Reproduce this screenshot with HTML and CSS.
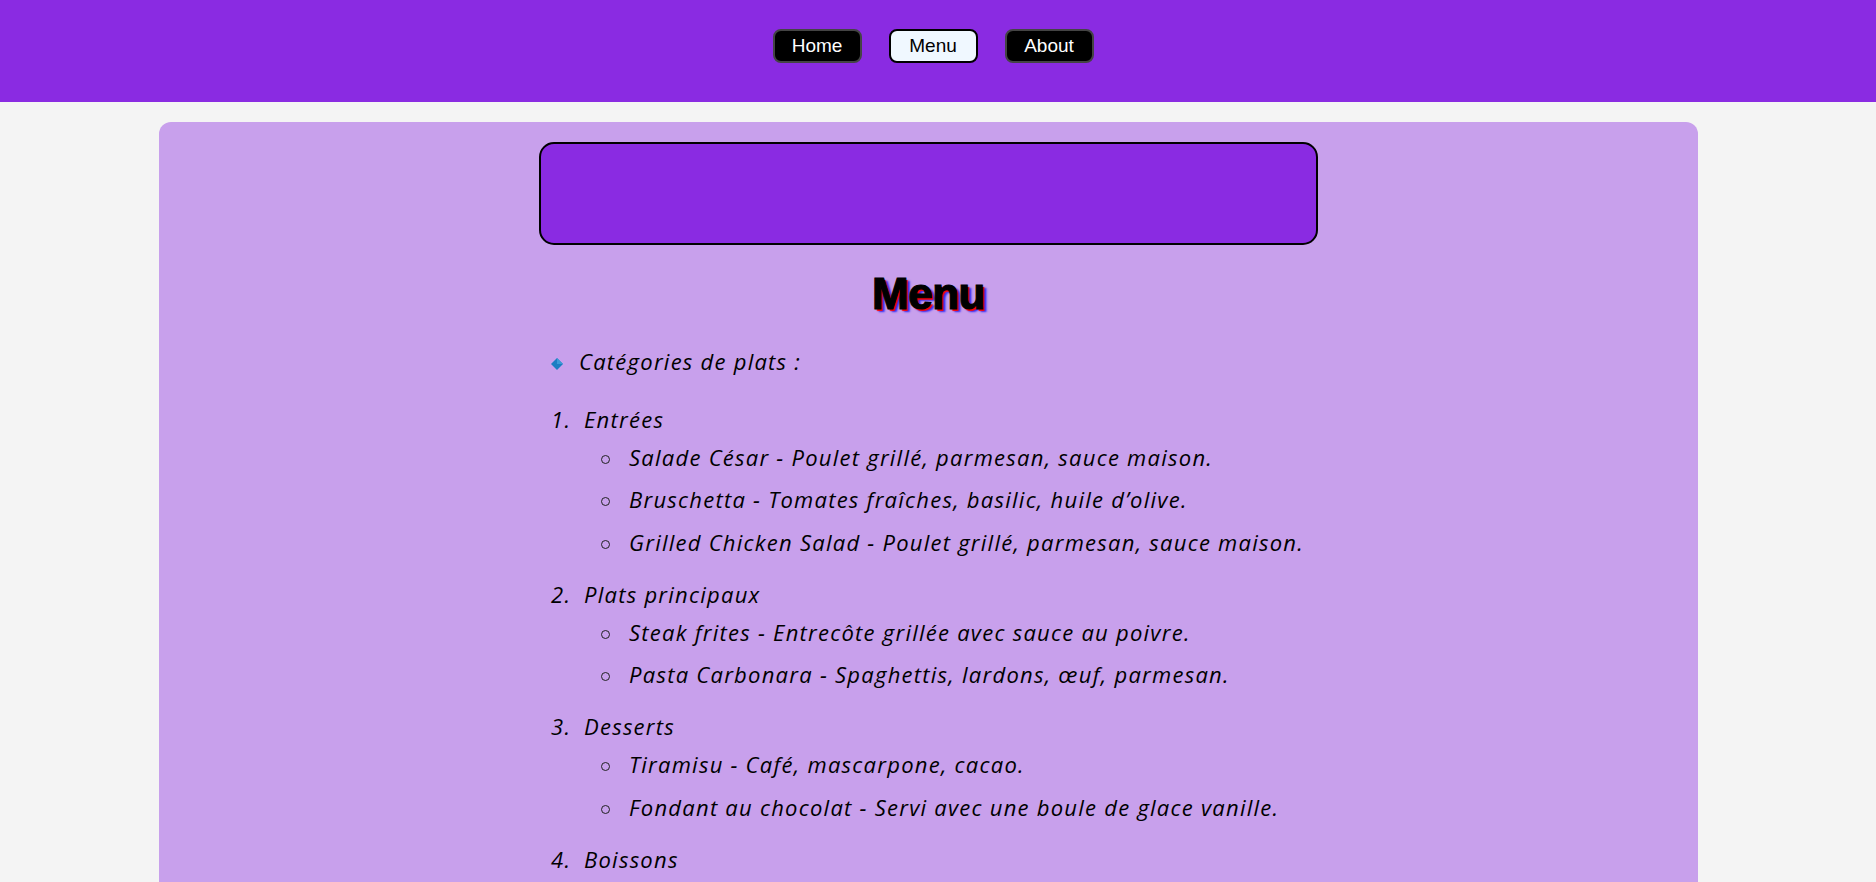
FILE: index.html
```html
<!DOCTYPE html>
<html lang="fr">
<head>
<meta charset="utf-8">
<title>Menu</title>
<link rel="stylesheet" href="styles.css">
</head>
<body>
<header class="site-header">
  <nav class="nav">
    <a class="nav-btn" href="#">Home</a>
    <a class="nav-btn nav-btn-active" href="#">Menu</a>
    <a class="nav-btn" href="#">About</a>
  </nav>
</header>
<main class="card">
  <div class="banner"></div>
  <h1 class="title">Menu</h1>
  <div class="content">
    <p class="categories"><span class="diamond"><svg width="12" height="12" viewBox="0 0 12 12"><polygon points="6,0 12,6 6,12 0,6" fill="#1b7ec2"/><polygon points="6,0 12,6 6,6" fill="#3a9ad6"/></svg></span>Catégories de plats :</p>
    <ol class="menu-list">
      <li class="menu-cat"><span class="cat-name">Entrées</span>
        <ul class="dish-list">
          <li class="dish">Salade César - Poulet grillé, parmesan, sauce maison.</li>
          <li class="dish">Bruschetta - Tomates fraîches, basilic, huile d’olive.</li>
          <li class="dish">Grilled Chicken Salad - Poulet grillé, parmesan, sauce maison.</li>
        </ul>
      </li>
      <li class="menu-cat"><span class="cat-name">Plats principaux</span>
        <ul class="dish-list">
          <li class="dish">Steak frites - Entrecôte grillée avec sauce au poivre.</li>
          <li class="dish">Pasta Carbonara - Spaghettis, lardons, œuf, parmesan.</li>
        </ul>
      </li>
      <li class="menu-cat"><span class="cat-name">Desserts</span>
        <ul class="dish-list">
          <li class="dish">Tiramisu - Café, mascarpone, cacao.</li>
          <li class="dish">Fondant au chocolat - Servi avec une boule de glace vanille.</li>
        </ul>
      </li>
      <li class="menu-cat"><span class="cat-name">Boissons</span></li>
    </ol>
  </div>
</main>
</body>
</html>
```
FILE: styles.css
```css
html, body {
  margin: 0;
  padding: 0;
}
body {
  background: #f4f4f4;
  font-family: "Liberation Sans", Arial, sans-serif;
}
.site-header {
  background: #8a2be2;
  padding: 29px 0 39px;
}
.nav {
  display: flex;
  justify-content: center;
  gap: 27px;
  padding-right: 10px;
}
.nav-btn {
  display: block;
  box-sizing: border-box;
  width: 89px;
  height: 34px;
  line-height: 30px;
  text-align: center;
  font-size: 19px;
  color: #fff;
  background: #000;
  border: 2px solid #444;
  border-radius: 8px;
  text-decoration: none;
}
.nav-btn-active {
  background: #f0f8ff;
  color: #000;
  border-color: #000;
}
.card {
  box-sizing: border-box;
  width: 1539px;
  margin: 20px 0 0 159px;
  padding: 20px 0 40px;
  background: #c8a0ec;
  border-radius: 12px;
  display: flex;
  flex-direction: column;
  align-items: center;
}
.banner {
  box-sizing: border-box;
  width: 779px;
  height: 103px;
  background: #8a2be2;
  border: 2px solid #000;
  border-radius: 15px;
}
.title {
  margin: 25px 0 0;
  height: 48px;
  line-height: 48px;
  font-family: "Liberation Sans", Arial, sans-serif;
  font-weight: bold;
  font-size: 44px;
  letter-spacing: -0.5px;
  color: #000;
  -webkit-text-stroke: 1.2px #000;
  text-shadow: 2px 2px 1px #ff0000, 4px 3px 2px #2a2aff;
}
.content {
  box-sizing: border-box;
  width: 779px;
  padding-left: 12px;
  margin-top: 26.75px;
  font-family: "Open Sans", "Noto Sans", sans-serif;
  font-style: italic;
  font-size: 22px;
  letter-spacing: 1.25px;
  line-height: 32.5px;
  color: #000;
}
.categories {
  margin: 0;
}
.diamond {
  display: inline-block;
  width: 28px;
  vertical-align: 0;
}
.diamond svg {
  display: block;
}
.menu-list {
  list-style: none;
  margin: 25.5px 0 0;
  padding: 0;
  counter-reset: cat;
}
.menu-cat {
  counter-increment: cat;
  padding-bottom: 9.5px;
}
.menu-cat::before {
  content: counter(cat) ".";
  display: inline-block;
  width: 33px;
}
.dish-list {
  list-style: none;
  margin: 5.5px 0 0;
  padding: 0 0 0 50px;
}
.dish {
  margin-bottom: 10px;
}
.dish::before {
  content: "";
  display: inline-block;
  box-sizing: border-box;
  width: 9px;
  height: 9px;
  border: 1px solid #222;
  border-radius: 50%;
  margin-right: 19px;
  vertical-align: 2px;
}
```
